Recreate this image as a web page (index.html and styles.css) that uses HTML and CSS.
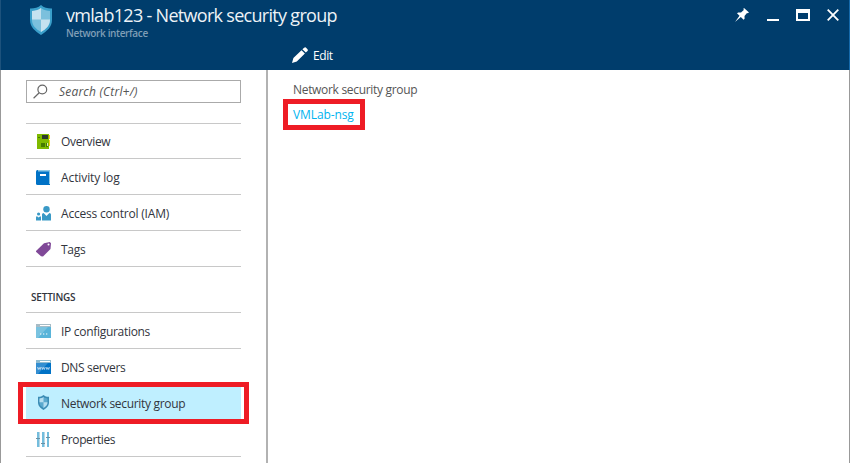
FILE: index.html
```html
<!DOCTYPE html>
<html lang="en">
<head>
<meta charset="utf-8">
<title>vmlab123 - Network security group</title>
<link rel="stylesheet" href="styles.css">
</head>
<body>
<svg class="defs" width="0" height="0" aria-hidden="true">
  <symbol id="shield" viewBox="0 0 24 30">
    <path fill="#3a9fca" d="M12 0C9 3 5 3.600 1 3.500V15C1 22 6 26 12 30C18 26 23 22 23 15V3.500C19 3.600 15 3 12 0Z"/>
    <path fill="#7bc0dd" d="M12 3C9 5.200 6 5.900 3 6V15C3 20.500 7 24 12 27C17 24 21 20.500 21 15V6C18 5.900 15 5.200 12 3Z"/>
    <path fill="#c5e2f0" d="M12 3C9 5.200 6 5.900 3 6V14.500H12ZM12 14.500H21C21 20.500 17 24 12 27Z"/>
  </symbol>
  <symbol id="shield-dark" viewBox="0 0 24 30">
    <path fill="#3b8cb5" d="M12 0C9 3 5 3.600 1 3.500V15C1 22 6 26 12 30C18 26 23 22 23 15V3.500C19 3.600 15 3 12 0Z"/>
    <path fill="#5ba9ce" d="M12 4C9 6.200 7 6.700 4 7V15C4 20 7 23 12 26C17 23 20 20 20 15V7C17 6.700 15 6.200 12 4Z"/>
    <path fill="#b5def0" d="M12 4C9 6.200 7 6.700 4 7V14.500H12ZM12 14.500H20C20 20 17 23 12 26Z"/>
  </symbol>
</svg>
<div class="blade">
  <header class="header">
    <div class="titlebar">
      <svg class="logo" width="24" height="30"><use href="#shield"/></svg>
      <div class="titles">
        <h1 class="title">vmlab123 - Network security group</h1>
        <div class="subtitle">Network interface</div>
      </div>
      <div class="controls">
        <svg width="14" height="14" viewBox="0 0 14 14"><path fill="#fff" d="M9 0L14 4.500L12.600 5.200L12 5L9.500 8L9.600 10.800L8.600 11.800L5.800 9L0 14L4.500 7.700L2 5.200L3.200 4.500L6 4.600L8.800 2L8.400 .8Z"/></svg>
        <svg width="12" height="14" viewBox="0 0 12 14"><path fill="#fff" d="M0 11h12v2H0z"/></svg>
        <svg width="14" height="14" viewBox="0 0 14 14"><path fill="#fff" fill-rule="evenodd" d="M0 1h14v12H0zM2 5v6h10V5z"/></svg>
        <svg width="12" height="14" viewBox="0 0 12 14"><path stroke="#fff" stroke-width="1.800" d="M.7 1.700L11.300 12.300M11.300 1.700L.7 12.300"/></svg>
      </div>
    </div>
    <div class="toolbar">
      <svg width="16" height="16" viewBox="0 0 16 16"><path fill="#fff" d="M0 16L1.400 11L9.500 3.200L12.900 6.500L4.800 14.500ZM10.400 2.300L12.200.7Q13 0 13.800.6L15.500 2.300Q16.200 3.200 15.500 4L13.800 5.600Z"/></svg>
      <span class="edit">Edit</span>
    </div>
  </header>
  <div class="body">
    <nav class="sidebar">
      <div class="search">
        <svg width="15" height="15" viewBox="0 0 15 15" fill="none" stroke="#666" stroke-width="1.200"><circle cx="9.300" cy="5.500" r="4.400"/><path d="M6.200 8.800L.6 14.200"/></svg>
        <span class="hint">Search (Ctrl+/)</span>
      </div>
      <ul class="menu">
        <li class="item first"><svg width="15" height="15" viewBox="0 0 15 15"><path fill="#7fba00" d="M1 0h12v15H1z"/><path fill="#fcd116" d="M13 1h1v4h-1zM13 6h1v6h-1z"/><path fill="#2d3a2a" d="M6 1h6v4H6z"/><path fill="#447a00" d="M5 9h4v4H5zM10 9h2v4h-2zM2 3h2v1H2z"/><path fill="#d8edb5" d="M11 9h1v3h-1z"/></svg><span class="overview">Overview</span></li>
        <li class="item"><svg width="15" height="15" viewBox="0 0 15 15"><path fill="#0072c6" d="M0 1.500Q0 0 1.500 0H14V15H1.500Q0 15 0 13.500Z"/><path fill="#8fc9e6" d="M2 0h12v1.500H2zM13 0h1v14h-1z"/><path fill="#fff" d="M4 4h6v2H4z"/></svg><span class="activity">Activity log</span></li>
        <li class="item"><svg width="15" height="15" viewBox="0 0 15 15" fill="#3999c6"><circle cx="10.500" cy="3.300" r="3.200"/><path d="M6 14.500V8.500Q6 7 7.600 7L10.500 10L13.400 7Q15 7 15 8.500V14.500Z"/><circle cx="2.600" cy="8" r="1.600"/><path d="M0 14.500V11.500Q0 10.300 1 10.300L2.600 11.500L4.200 10.300Q5 10.300 5 11.500V14.500Z"/></svg><span class="access">Access control (IAM)</span></li>
        <li class="item"><svg width="15" height="15" viewBox="0 0 15 15"><path fill="#804998" d="M0 9L8 1.200L13.800 0L15 1.200L14.500 7L7 14.500L5 14.200L0 9.800Z"/><circle cx="12.500" cy="2.600" r="1" fill="#fff"/></svg><span class="tags">Tags</span></li>
      </ul>
      <h2 class="section">SETTINGS</h2>
      <ul class="menu">
        <li class="item"><svg width="15" height="14" viewBox="0 0 15 14"><path fill="#59b4d9" d="M0 0h15v14H0z"/><path fill="#a7bcc6" d="M0 0h15v3H0z"/><path fill="#fff" d="M4 1h10v1H4zM4 9.500h1.300v1H4zM7 9.500h1.300v1H7zM10 9.500h1.300v1H10z"/><path fill="#fff" opacity=".2" d="M0 3h12L2 14H0z"/></svg><span class="ip">IP configurations</span></li>
        <li class="item"><svg width="15" height="14" viewBox="0 0 15 14"><path fill="#0072c6" d="M0 0h15v14H0z"/><path fill="#8dbbd0" d="M0 0h15v3H0z"/><path fill="#fff" d="M4 1h10v1H4z"/><path fill="#fff" opacity=".2" d="M0 3h12L2 14H0z"/><path fill="none" stroke="#fff" stroke-width=".6" d="M1.500 7l.8 2.500.9-2 .9 2 .8-2.500M5.800 7l.8 2.500.9-2 .9 2 .8-2.500M10.100 7l.8 2.500.9-2 .9 2 .8-2.500"/></svg><span class="dns">DNS servers</span></li>
        <li class="item selected"><svg width="15" height="15"><use href="#shield-dark"/></svg><span class="nsg">Network security group</span></li>
        <li class="item"><svg width="15" height="15" viewBox="0 0 15 15"><path fill="#74bddd" d="M1 0h2v15H1zM6 0h2v15H6zM11 0h2v15h-2z"/><path fill="#b8d8e6" d="M3 0h1v15H3zM8 0h1v15H8z"/><path fill="#6c8fa2" d="M0 6h4v1H0zM5 11h4v1H5zM10 5h4v1h-4z"/></svg><span class="props">Properties</span></li>
      </ul>
    </nav>
    <main class="content">
      <div class="label">Network security group</div>
      <div class="callout"><a class="link">VMLab-nsg</a></div>
    </main>
  </div>
</div>
</body>
</html>
```

FILE: styles.css
```css
* { box-sizing: border-box; }
body {
  margin: 0;
  font-family: "Open Sans", "Noto Sans", sans-serif;
  font-size: 12px;
  color: #32353d;
  background: #fff;
}
.defs { position: absolute; }
svg { display: block; flex: none; }
.blade { height: 463px; display: flex; flex-direction: column; overflow: hidden; }
.header {
  height: 70px;
  flex: none;
  background: #003d6c;
  border-left: 1px solid #1d527c;
  border-right: 1px solid #1569aa;
  color: #fff;
}
.titlebar { height: 41px; display: flex; padding: 5px 10px 0 28px; }
.titles { margin-left: 13px; flex: 1; white-space: nowrap; }
.title {
  margin: 0 0 2px;
  font-size: 18px;
  font-weight: 400;
  line-height: 20px;
  letter-spacing: -0.7px;
  color: #eef3f7;
}
.subtitle {
  font-size: 10px;
  font-weight: 600;
  line-height: 13px;
  letter-spacing: -0.35px;
  color: #7f9eb6;
}
.controls { display: flex; gap: 17px; padding-top: 3px; }
.controls svg:first-child { margin-right: 1px; }
.toolbar { display: flex; gap: 5px; padding: 6px 0 0 291px; line-height: 17px; }
.edit { letter-spacing: -0.4px; }
.body { flex: 1; display: flex; border-left: 1px solid #999; border-right: 1px solid #999; }
.sidebar { width: 267px; flex: none; padding: 10px 25px 0; border-right: 2px solid #b2b2b2; }
.search {
  height: 23px;
  border: 1px solid #aaa;
  display: flex;
  align-items: center;
  padding-left: 6px;
  gap: 11px;
  margin-bottom: 20px;
}
.hint { font-style: italic; color: #555; white-space: nowrap; letter-spacing: 0.2px; }
.menu { list-style: none; margin: 0; padding: 0; border-top: 1px solid #c8c8c8; }
.item {
  height: 36px;
  border-bottom: 1px solid #c8c8c8;
  display: flex;
  align-items: center;
  padding: 2px 0 0 10px;
  gap: 10px;
  white-space: nowrap;
}
.item.first { height: 35px; padding-top: 1px; }
.overview { letter-spacing: -0.35px; }
.activity { letter-spacing: -0.1px; }
.access { letter-spacing: -0.2px; }
.tags { letter-spacing: -0.25px; }
.ip { letter-spacing: -0.3px; }
.dns { letter-spacing: -0.35px; }
.nsg, .label { letter-spacing: -0.31px; }
.props { letter-spacing: -0.4px; }
.link { letter-spacing: -0.1px; }
.item svg { margin-top: -1px; }
.section {
  margin: 0;
  height: 45px;
  padding: 22px 0 0 5px;
  font-size: 10px;
  line-height: 17px;
  font-weight: 600;
  letter-spacing: -0.2px;
}
.item.selected {
  height: 42px;
  margin: -3px -8px;
  padding: 0 0 0 13px;
  border: 5px solid #ee1c25;
  background: linear-gradient(#bfefff, #bfefff) 3px 0 / 215px 100% no-repeat #fff;
  position: relative;
}
.content { padding: 10px 15px; }
.label { margin: 0 0 0 10px; height: 18px; line-height: 19px; color: #555; }
.callout { width: 82px; height: 31px; margin-top: 1px; border: 5px solid #ee1c25; padding-left: 5px; line-height: 21px; }
.link { color: #00b4ef; }
```
